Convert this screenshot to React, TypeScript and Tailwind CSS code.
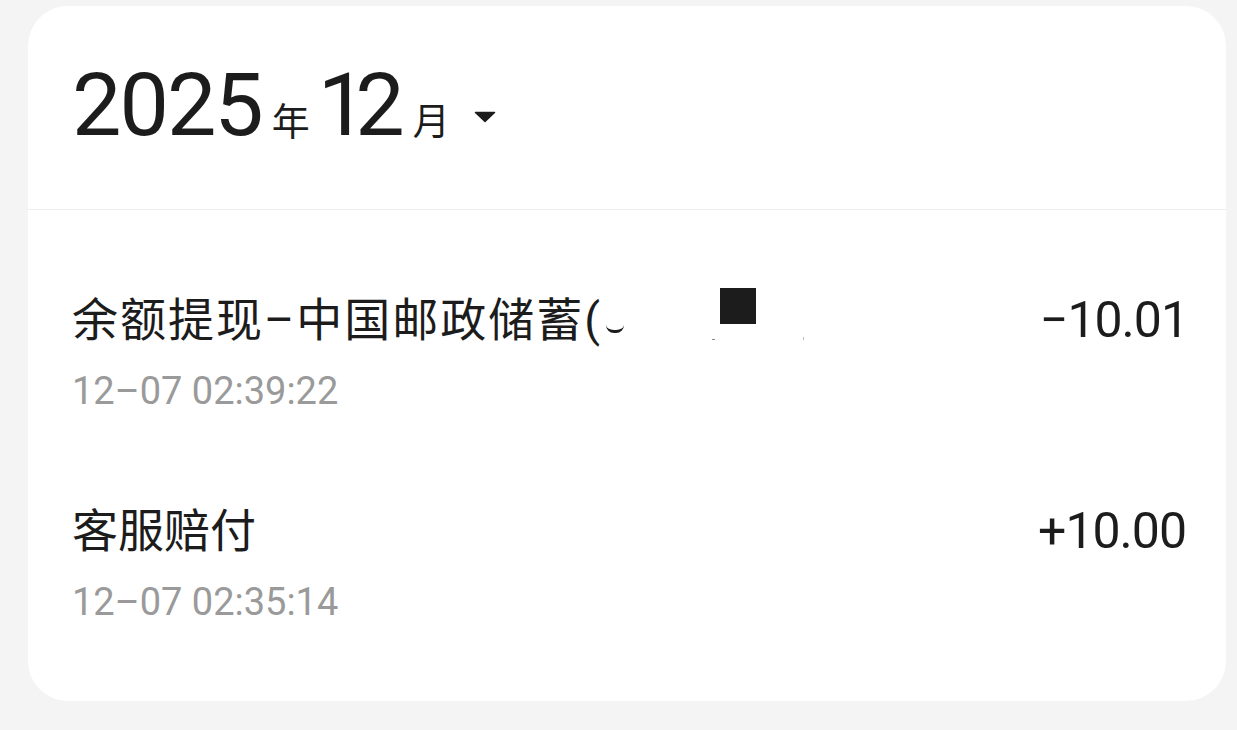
export default function App() {
  const font = { fontFamily: 'Roboto, "Noto Sans CJK SC", sans-serif' };
  return (
    <div className="w-[1237px] h-[730px] bg-[#f4f4f4] pt-[6px] pl-[28px] pr-[11px]" style={font}>
      <div className="bg-white rounded-[40px] h-[695px] flex flex-col">
        <div className="h-[204px] border-b border-[#eeeeee] flex items-end pl-[44px] pb-[59px]">
          <div className="flex items-baseline text-[#1c1c1c]">
            <span className="text-[88px] leading-none tracking-[-2px]">2025</span>
            <span className="text-[38px] leading-none ml-[10px] mr-[8px]">年</span>
            <span className="text-[88px] leading-none tracking-[-12px]">1</span>
            <span className="text-[88px] leading-none tracking-[-2px]">2</span>
            <span className="text-[37px] leading-none ml-[10px]">月</span>
            <svg width="22" height="12" viewBox="0 0 22 12" className="ml-[24px] mb-[15px] relative top-[-12px]">
              <path d="M1.5 1.5 L20.5 1.5 L11 10.5 Z" fill="#1c1c1c" strokeLinejoin="round" stroke="#1c1c1c" strokeWidth="1.5" />
            </svg>
          </div>
        </div>
        <div className="flex flex-col pl-[44px] pr-[42px] pt-[84px]">
          <div className="flex flex-col h-[211px]">
            <div className="flex items-center justify-between h-[52px]">
              <div className="flex items-center relative">
                <span className="text-[46px] text-[#1c1c1c] leading-none tracking-[2px]">余额提现–中国邮政储蓄(</span>
                <span className="inline-block w-[18px] h-[8px] border-b-[3px] border-[#1c1c1c] rounded-b-full ml-[4px] mt-[18px]"></span>
                <span className="absolute left-[648px] top-[-9px] w-[36px] h-[36px] bg-[#1c1c1c]"></span>
                <span className="absolute left-[640px] top-[42px] w-[3px] h-[1px] bg-[#888888]"></span>
                <span className="absolute left-[731px] top-[40px] w-[1px] h-[3px] bg-[#bbbbbb]"></span>
              </div>
              <span className="text-[50px] text-[#1c1c1c] leading-none tracking-[-1px] mr-[-4px]">−10.01</span>
            </div>
            <div className="text-[38px] text-[#9a9a9a] leading-none mt-[26px]">12–07 02:39:22</div>
          </div>
          <div className="flex flex-col">
            <div className="flex items-center justify-between h-[52px]">
              <span className="text-[46px] text-[#1c1c1c] leading-none">客服赔付</span>
              <span className="text-[50px] text-[#1c1c1c] leading-none tracking-[-1px] mr-[-2px]">+10.00</span>
            </div>
            <div className="text-[38px] text-[#9a9a9a] leading-none mt-[26px]">12–07 02:35:14</div>
          </div>
        </div>
      </div>
    </div>
  );
}
